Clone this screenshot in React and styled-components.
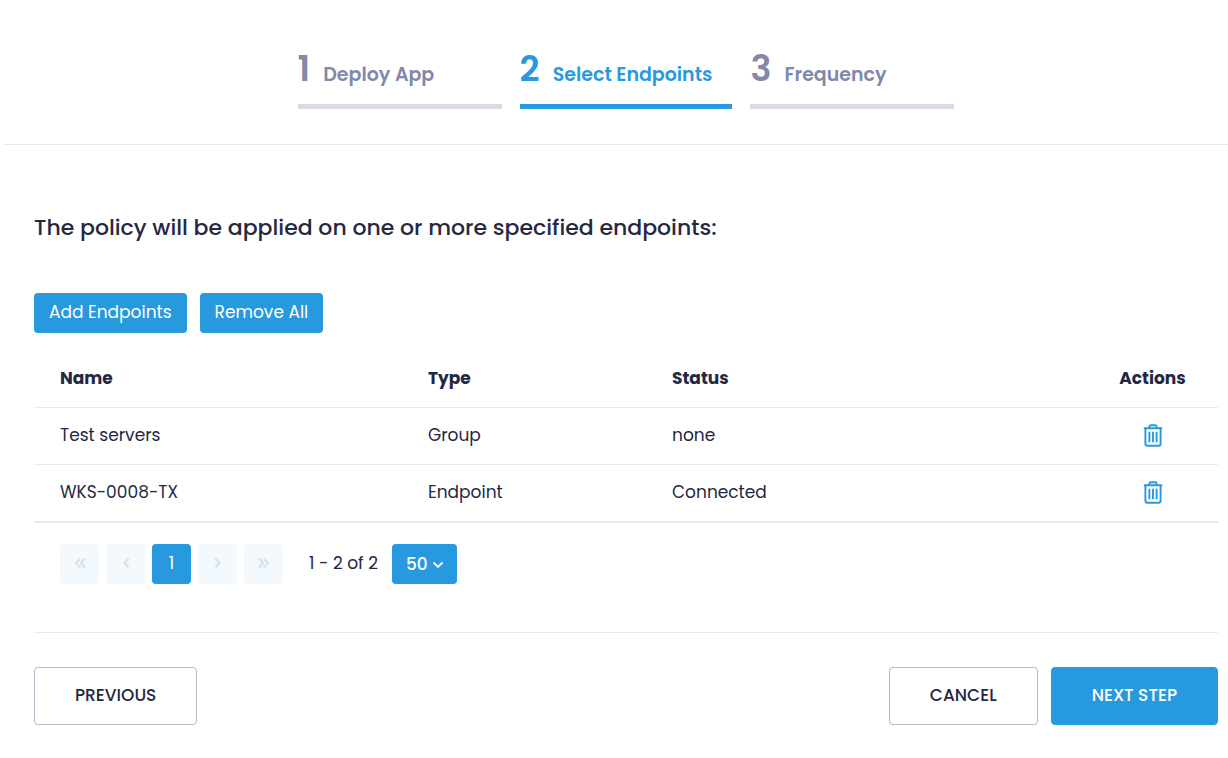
import React, { useState } from "react";
import styled, { createGlobalStyle } from "styled-components";

const steps = [
  { number: 1, label: "Deploy App" },
  { number: 2, label: "Select Endpoints" },
  { number: 3, label: "Frequency" },
];

const initialEndpoints = [
  { name: "Test servers", type: "Group", status: "none" },
  { name: "WKS-0008-TX", type: "Endpoint", status: "Connected" },
];

const TrashIcon = () => (
  <svg width="20" height="23" viewBox="0 0 20 23" fill="none" stroke="currentColor" strokeWidth="1.9" aria-hidden="true">
    <path d="M.8 4.3h18.4M6.4 4V2.7Q6.4 1.2 7.9 1.2h4.2q1.5 0 1.5 1.5V4M2.4 4.5v15.2q0 2 2 2h11.2q2 0 2-2V4.5" />
    <path d="M6.4 7.7v10.6M10 7.7v10.6M13.6 7.7v10.6" />
  </svg>
);

const Chevrons = ({ double, right }) => (
  <svg
    width="14"
    height="12"
    viewBox="0 0 14 12"
    fill="none"
    stroke="currentColor"
    strokeWidth="2.6"
    strokeLinejoin="round"
    aria-hidden="true"
    transform={right ? "rotate(180)" : undefined}
  >
    <path d={double ? "M7 1.5L3 6l4 4.5M12 1.5L8 6l4 4.5" : "M9.5 1.5L5.5 6l4 4.5"} />
  </svg>
);

const App = () => {
  const [endpoints, setEndpoints] = useState(initialEndpoints);

  return (
    <>
      <GlobalStyle />
      <Stepper>
        {steps.map((step) => (
          <Step key={step.number} $active={step.number === 2}>
            <b>{step.number}</b>
            <span>{step.label}</span>
          </Step>
        ))}
      </Stepper>

      <Content>
        <Title>The policy will be applied on one or more specified endpoints:</Title>

        <Toolbar>
          <SmallButton>Add Endpoints</SmallButton>
          <SmallButton onClick={() => setEndpoints([])}>Remove All</SmallButton>
        </Toolbar>

        <Table>
          <thead>
            <tr>
              <th>Name</th>
              <th>Type</th>
              <th>Status</th>
              <th>Actions</th>
            </tr>
          </thead>
          <tbody>
            {endpoints.map((item) => (
              <tr key={item.name}>
                <td>{item.name}</td>
                <td>{item.type}</td>
                <td>{item.status}</td>
                <td>
                  <IconButton
                    aria-label={`Delete ${item.name}`}
                    onClick={() => setEndpoints(endpoints.filter((e) => e !== item))}
                  >
                    <TrashIcon />
                  </IconButton>
                </td>
              </tr>
            ))}
          </tbody>
        </Table>

        <Pagination>
          <PageButton disabled aria-label="First page"><Chevrons double /></PageButton>
          <PageButton disabled aria-label="Previous page"><Chevrons /></PageButton>
          <PageButton>1</PageButton>
          <PageButton disabled aria-label="Next page"><Chevrons right /></PageButton>
          <PageButton disabled aria-label="Last page"><Chevrons double right /></PageButton>
          <Range>1 - 2 of 2</Range>
          <PageSize>
            <select aria-label="Rows per page" defaultValue="50">
              <option>50</option>
              <option>100</option>
            </select>
            <svg width="12" height="8" viewBox="0 0 12 8" fill="none" stroke="currentColor" strokeWidth="1.8" aria-hidden="true">
              <path d="M1.5 1.5L6 6l4.5-4.5" />
            </svg>
          </PageSize>
        </Pagination>

        <Footer>
          <WizardButton>PREVIOUS</WizardButton>
          <div>
            <WizardButton>CANCEL</WizardButton>
            <WizardButton $primary>NEXT STEP</WizardButton>
          </div>
        </Footer>
      </Content>
    </>
  );
};

const GlobalStyle = createGlobalStyle`
  :root {
    --primary: #2799de;
    --text: #252843;
    --border: #e8e9ee;
  }

  * {
    box-sizing: border-box;
  }

  body {
    margin: 0;
    background: #fff;
    color: var(--text);
    font-family: Poppins, Inter, "Open Sans", sans-serif;
    font-size: 17px;
  }

  button,
  select {
    font: inherit;
    cursor: pointer;
  }
`;

const Stepper = styled.nav`
  display: flex;
  justify-content: center;
  gap: 18px;
  margin-left: 3px;
  padding: 48px 0 35px 21px;
  border-bottom: 1px solid var(--border);
`;

const Step = styled.div`
  display: flex;
  align-items: baseline;
  gap: 13px;
  min-width: 204px;
  height: 61px;
  border-bottom: 5px solid ${(props) => (props.$active ? "var(--primary)" : "#d9d9e8")};
  padding-right: 20px;
  color: ${(props) => (props.$active ? "var(--primary)" : "#8188a9")};
  font-size: 19px;
  font-weight: 600;

  b {
    font-size: 35px;
    font-weight: 600;
    line-height: 42px;
  }
`;

const Content = styled.main`
  padding: 66px 10px 33px 34px;
`;

const Title = styled.h1`
  margin: 0;
  font-size: 22px;
  font-weight: 500;
  line-height: 34px;
`;

const Toolbar = styled.div`
  display: flex;
  gap: 13px;
  margin: 48px 0 17px;
`;

const SmallButton = styled.button`
  height: 40px;
  padding: 0 15px 2px;
  border: 0;
  border-radius: 4px;
  background: var(--primary);
  color: #fff;
`;

const Table = styled.table`
  width: 100%;
  table-layout: fixed;
  border-collapse: separate;
  border-spacing: 0;
  border-bottom: 1px solid var(--border);

  th,
  td {
    height: 57px;
    padding: 0 0 2px 26px;
    border-bottom: 1px solid var(--border);
    text-align: left;
  }

  th {
    height: 58px;
    font-weight: 700;
  }

  th:nth-child(1) {
    width: 368px;
  }

  th:nth-child(2) {
    width: 244px;
  }

  th:last-child,
  td:last-child {
    width: 131px;
    padding: 0 0 2px;
    text-align: center;
  }
`;

const IconButton = styled.button`
  display: block;
  margin: 0 auto;
  padding: 0;
  border: 0;
  background: none;
  color: var(--primary);

  svg {
    display: block;
  }
`;

const Pagination = styled.div`
  display: flex;
  align-items: center;
  gap: 7px;
  padding: 21px 26px 48px;
`;

const PageButton = styled.button`
  display: flex;
  align-items: center;
  justify-content: center;
  width: 39px;
  height: 40px;
  padding: 0 0 2px;
  border: 0;
  border-radius: 4px;
  background: var(--primary);
  color: #fff;

  &:disabled {
    background: #f4f9fd;
    color: #d4e4f1;
  }
`;

const Range = styled.span`
  margin: 0 7px 0 19px;
  padding-bottom: 2px;
`;

const PageSize = styled.div`
  position: relative;

  select {
    width: 65px;
    height: 40px;
    padding: 0 14px;
    border: 0;
    border-radius: 4px;
    appearance: none;
    background: var(--primary);
    color: #fff;
    font-weight: 500;
  }

  svg {
    position: absolute;
    top: 17px;
    right: 13px;
    color: #fff;
    pointer-events: none;
  }
`;

const Footer = styled.footer`
  display: flex;
  justify-content: space-between;
  padding-top: 34px;
  border-top: 1px solid var(--border);

  div {
    display: flex;
    gap: 13px;
  }
`;

const WizardButton = styled.button`
  height: 58px;
  padding: 0 40px 2px;
  border: 1px solid ${(props) => (props.$primary ? "var(--primary)" : "#b7b8ca")};
  border-radius: 4px;
  background: ${(props) => (props.$primary ? "var(--primary)" : "#fff")};
  color: ${(props) => (props.$primary ? "#fff" : "var(--text)")};
  font-weight: 500;
`;

export default App;
